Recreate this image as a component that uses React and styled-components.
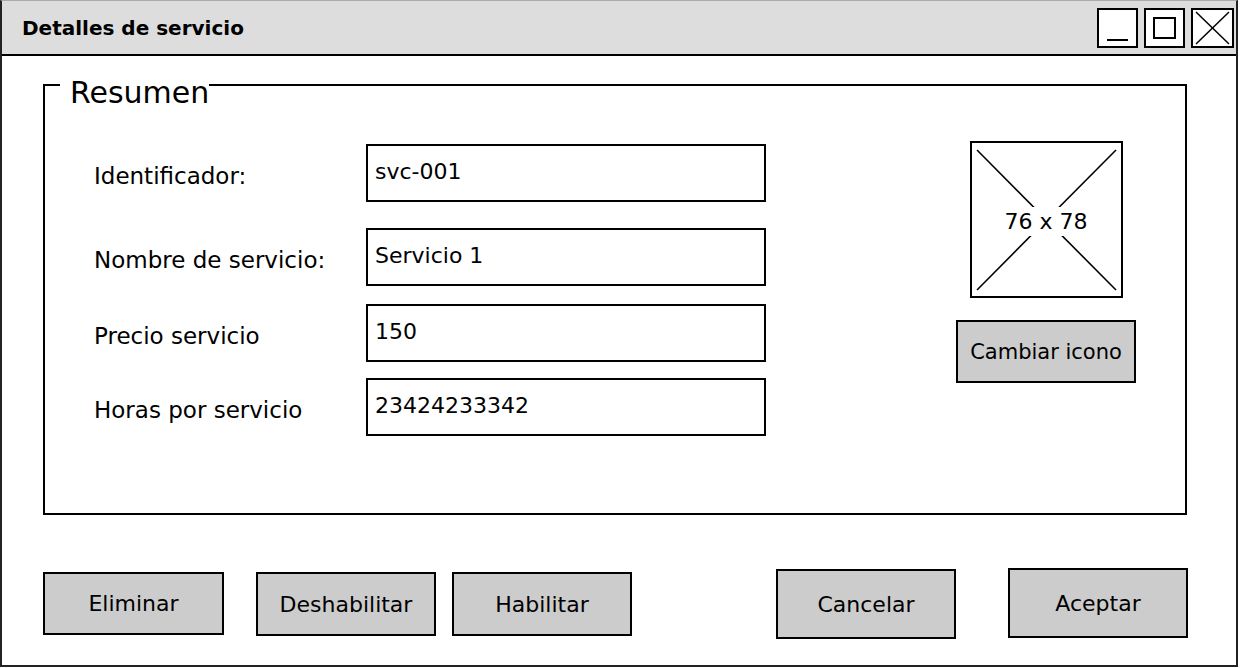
import React from 'react';
import styled, { createGlobalStyle } from 'styled-components';

const Global = createGlobalStyle`
  html, body { margin: 0; padding: 0; background: #fff; }
  body { font-family: "DejaVu Sans", "Liberation Sans", sans-serif; color: #000; }
  * { box-sizing: border-box; }
`;

const Window = styled.div`
  width: 1238px;
  height: 667px;
  border: 2px solid #222;
  border-top: 1px solid #aaa;
  display: flex;
  flex-direction: column;
  background: #fff;
`;

const TitleBar = styled.div`
  height: 55px;
  flex: none;
  display: flex;
  align-items: center;
  padding: 0 2px 0 20px;
  background: #dddddd;
  border-bottom: 2px solid #000;
`;

const Title = styled.div`
  font-weight: bold;
  font-size: 20px;
`;

const Controls = styled.div`
  margin-left: auto;
  display: flex;
  gap: 6px;
`;

const ControlBox = styled.div`
  width: ${p => p.$w || 41}px;
  height: 40px;
  border: 2px solid #000;
  background: #fff;
  display: flex;
  align-items: center;
  justify-content: center;
`;

const Body = styled.div`
  display: flex;
  flex-direction: column;
  padding: 3px 0 0 41px;
`;

const Group = styled.fieldset`
  width: 1144px;
  margin: 0;
  border: 2px solid #000;
  padding: 30px 0 77px 15px;
  min-width: 0;
`;

const Legend = styled.legend`
  font-size: 30px;
  line-height: 36px;
  padding: 16px 0 0 10px;
`;

const GroupContent = styled.div`
  display: flex;
  padding-left: 34px;
`;

const Form = styled.div`
  display: flex;
  flex-direction: column;
  padding-top: 3px;
`;

const Row = styled.div`
  display: flex;
  align-items: center;
  margin-top: ${p => p.$mt || 0}px;
`;

const Label = styled.div`
  width: 272px;
  font-size: 23px;
  padding-top: 6px;
`;

const TextInput = styled.input`
  width: 400px;
  height: 58px;
  border: 2px solid #000;
  padding: 0 0 4px 7px;
  font-family: "DejaVu Sans", "Liberation Sans", sans-serif;
  font-size: 22px;
  color: #000;
  background: #fff;
  outline: none;
`;

const IconColumn = styled.div`
  margin-left: 190px;
  width: 180px;
  display: flex;
  flex-direction: column;
  align-items: center;
`;

const ImageBox = styled.div`
  width: 153px;
  height: 157px;
  border: 2px solid #000;
  display: grid;
  & > * { grid-area: 1 / 1; }
`;

const ImageLabel = styled.div`
  align-self: center;
  justify-self: center;
  font-size: 22px;
  background: #fff;
  padding: 2px 3px;
  margin-top: 4px;
`;

const Button = styled.button`
  width: ${p => p.$w || 180}px;
  height: ${p => p.$h || 63}px;
  margin-top: ${p => p.$mt || 0}px;
  margin-left: ${p => p.$ml || 0}px;
  border: 2px solid #000;
  background: #cccccc;
  font-family: "DejaVu Sans", "Liberation Sans", sans-serif;
  font-size: ${p => p.$fs || 22}px;
  color: #000;
  padding: 0;
  flex: none;
`;

const Footer = styled.div`
  display: flex;
  align-items: flex-start;
  margin-top: 53px;
`;

function Cross() {
  return (
    <svg width="149" height="153" viewBox="0 0 149 153">
      <line x1="5" y1="7" x2="144" y2="147" stroke="#000" strokeWidth="1.6" />
      <line x1="144" y1="7" x2="5" y2="147" stroke="#000" strokeWidth="1.6" />
    </svg>
  );
}

export default function App() {
  const rows = [
    { label: 'Identificador:', value: 'svc-001', mt: 0 },
    { label: 'Nombre de servicio:', value: 'Servicio 1', mt: 26 },
    { label: 'Precio servicio', value: '150', mt: 18 },
    { label: 'Horas por servicio', value: '23424233342', mt: 16 },
  ];
  return (
    <>
      <Global />
      <Window>
        <TitleBar>
          <Title>Detalles de servicio</Title>
          <Controls>
            <ControlBox>
              <svg width="37" height="36" viewBox="0 0 37 36">
                <line x1="8" y1="30" x2="29" y2="30" stroke="#000" strokeWidth="2" />
              </svg>
            </ControlBox>
            <ControlBox>
              <svg width="37" height="36" viewBox="0 0 37 36">
                <rect x="8" y="8" width="21" height="20" fill="none" stroke="#000" strokeWidth="2" />
              </svg>
            </ControlBox>
            <ControlBox $w={43}>
              <svg width="39" height="36" viewBox="0 0 39 36">
                <line x1="3" y1="2" x2="36" y2="34" stroke="#000" strokeWidth="1.5" />
                <line x1="36" y1="2" x2="3" y2="34" stroke="#000" strokeWidth="1.5" />
              </svg>
            </ControlBox>
          </Controls>
        </TitleBar>
        <Body>
          <Group>
            <Legend>Resumen</Legend>
            <GroupContent>
              <Form>
                {rows.map(r => (
                  <Row key={r.label} $mt={r.mt}>
                    <Label>{r.label}</Label>
                    <TextInput readOnly defaultValue={r.value} />
                  </Row>
                ))}
              </Form>
              <IconColumn>
                <ImageBox>
                  <Cross />
                  <ImageLabel>76 x 78</ImageLabel>
                </ImageBox>
                <Button $mt={22} $fs={21}>Cambiar icono</Button>
              </IconColumn>
            </GroupContent>
          </Group>
          <Footer>
            <Button $w={181} $mt={4}>Eliminar</Button>
            <Button $ml={32} $mt={4} $h={64}>Deshabilitar</Button>
            <Button $ml={16} $mt={4} $h={64}>Habilitar</Button>
            <Button $ml={144} $mt={1} $h={70}>Cancelar</Button>
            <Button $ml={52} $h={70}>Aceptar</Button>
          </Footer>
        </Body>
      </Window>
    </>
  );
}
